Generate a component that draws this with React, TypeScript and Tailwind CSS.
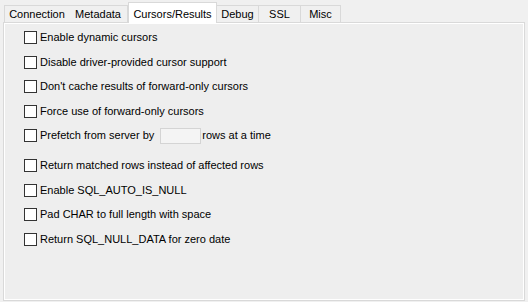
import React from "react";

const tabs = [
  { label: "Connection", w: "w-[65px]" },
  { label: "Metadata", w: "w-[59px]" },
  { label: "Cursors/Results", w: "w-[89px]" },
  { label: "Debug", w: "w-[41px]" },
  { label: "SSL", w: "w-[42px]" },
  { label: "Misc", w: "w-[41px]" },
];

function Check({ label }: { label: string }) {
  return (
    <div className="flex h-[13px] items-center">
      <span className="h-[13px] w-[13px] shrink-0 border border-[#333333] bg-white" />
      <span className="ml-[3px] leading-none whitespace-nowrap">{label}</span>
    </div>
  );
}

export default function App() {
  return (
    <div
      className="h-[302px] w-[528px] overflow-hidden bg-[#f0f0f0] text-[11px] text-black"
      style={{ fontFamily: '"Liberation Sans", Arial, sans-serif' }}
    >
      {/* tab strip */}
      <div className="relative z-10 flex h-[23px] items-end pl-[4px]">
        {tabs.map((t, i) =>
          i === 2 ? (
            <div
              key={t.label}
              className={`${t.w} flex h-[21px] shrink-0 items-start justify-center border border-b-0 border-[#d9d9d9] bg-white pt-[3px]`}
            >
              {t.label}
            </div>
          ) : (
            <div
              key={t.label}
              className={`${t.w} mb-[1px] flex h-[17px] shrink-0 items-center justify-center border-t border-[#d9d9d9] bg-[#f0f0f0] ${
                i === 0 || i > 3 ? "border-l" : ""
              } ${i === 1 || i === tabs.length - 1 ? "border-r" : ""}`}
            >
              {t.label}
            </div>
          )
        )}
      </div>

      {/* panel */}
      <div className="-mt-[1px] mx-[3px] h-[279px] border border-[#d9d9d9] bg-white p-[1px]">
        <div className="flex h-full flex-col bg-[#eeeeee] pl-[19px] pt-[7px]">
          <div className="flex flex-col gap-[11.5px]">
            <Check label="Enable dynamic cursors" />
            <Check label="Disable driver-provided cursor support" />
            <Check label="Don't cache results of forward-only cursors" />
            <Check label="Force use of forward-only cursors" />
            <div className="flex h-[13px] items-center">
              <span className="h-[13px] w-[13px] shrink-0 border border-[#333333] bg-white" />
              <span className="ml-[3px] leading-none whitespace-nowrap">Prefetch from server by</span>
              <span className="ml-[6px] h-[16px] w-[41px] shrink-0 border border-[#d4d4d4] bg-[#f4f4f4]" />
              <span className="ml-[1px] leading-none whitespace-nowrap">rows at a time</span>
            </div>
            <div className="mt-[5.5px]">
              <Check label="Return matched rows instead of affected rows" />
            </div>
            <Check label="Enable SQL_AUTO_IS_NULL" />
            <Check label="Pad CHAR to full length with space" />
            <Check label="Return SQL_NULL_DATA for zero date" />
          </div>
        </div>
      </div>
    </div>
  );
}
